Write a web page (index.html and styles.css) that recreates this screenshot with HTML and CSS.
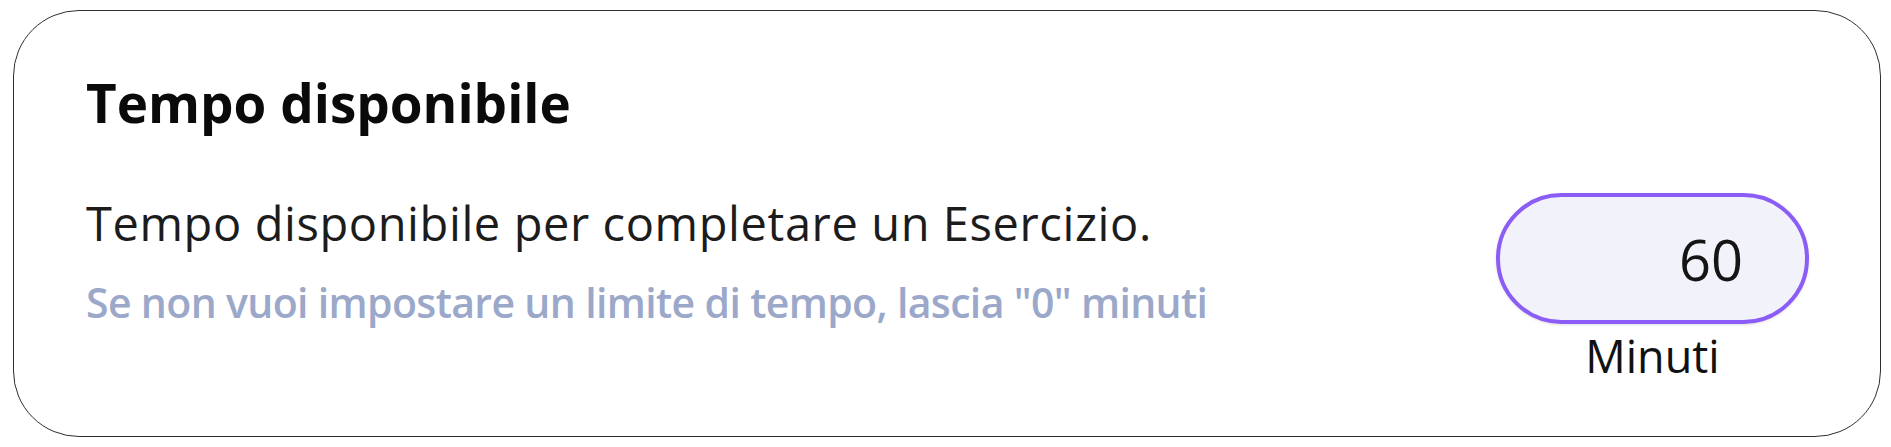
FILE: index.html
```html
<!DOCTYPE html>
<html lang="it">
<head>
<meta charset="utf-8">
<title>Tempo disponibile</title>
<link rel="stylesheet" href="styles.css">
</head>
<body>
<section class="card">
  <h2 class="card-title">Tempo disponibile</h2>
  <div class="row">
    <div class="text-col">
      <p class="desc">Tempo disponibile per completare un Esercizio.</p>
      <p class="hint">Se non vuoi impostare un limite di tempo, lascia "0" minuti</p>
    </div>
    <div class="input-col">
      <div class="pill">60</div>
      <div class="unit">Minuti</div>
    </div>
  </div>
</section>
</body>
</html>
```

FILE: styles.css
```css
* { box-sizing: border-box; }
html, body { margin: 0; padding: 0; background: #ffffff; }
body {
  padding: 10px 10px 10px 13px;
  font-family: "Open Sans", "Liberation Sans", sans-serif;
}
.card {
  width: 1868px;
  height: 427px;
  border: 1px solid #2e2e2e;
  border-radius: 66px;
  padding: 60px 71px 0 72px;
  background: #ffffff;
}
.card-title {
  margin: 0;
  font-size: 53px;
  line-height: 64px;
  font-weight: 700;
  color: #0a0a0a;
}
.row {
  display: flex;
  justify-content: space-between;
  align-items: flex-start;
  margin-top: 58px;
}
.text-col { display: flex; flex-direction: column; gap: 21px; }
.desc, .hint { margin: 0; }
.desc {
  font-size: 47px;
  line-height: 60px;
  letter-spacing: 0.6px;
  color: #1c1c1c;
}
.hint {
  font-size: 41px;
  line-height: 56px;
  font-weight: 600;
  letter-spacing: -0.65px;
  color: #9ba8c9;
}
.input-col { display: flex; flex-direction: column; align-items: center; gap: 4px; }
.pill {
  width: 313px;
  height: 131px;
  border: 4px solid #8b5cf6;
  border-radius: 66px;
  background: #f2f2fb;
  box-shadow: 0 1px 3px rgba(0,0,0,0.12);
  display: flex;
  align-items: center;
  justify-content: flex-end;
  padding-right: 62px;
  font-size: 56px;
  color: #151515;
}
.unit {
  font-size: 45px;
  line-height: 56px;
  color: #111111;
}
```
